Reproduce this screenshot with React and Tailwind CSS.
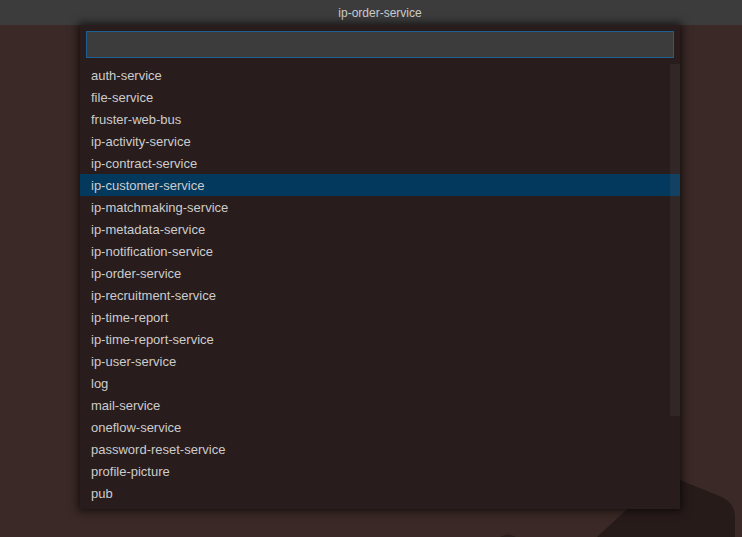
const items = [
  'auth-service',
  'file-service',
  'fruster-web-bus',
  'ip-activity-service',
  'ip-contract-service',
  'ip-customer-service',
  'ip-matchmaking-service',
  'ip-metadata-service',
  'ip-notification-service',
  'ip-order-service',
  'ip-recruitment-service',
  'ip-time-report',
  'ip-time-report-service',
  'ip-user-service',
  'log',
  'mail-service',
  'oneflow-service',
  'password-reset-service',
  'profile-picture',
  'pub',
];

export default function App() {
  const selected = 'ip-customer-service';

  return (
    <div className="relative w-[742px] h-[537px] overflow-hidden bg-[#3a2926] font-['Liberation_Sans',sans-serif]">
      {/* background decoration */}
      <svg className="absolute inset-0" width="742" height="537" viewBox="0 0 742 537">
        <path d="M597 537 L665 474 L722 497 Q735 504 735 517 L735 537 Z" fill="#271b1a" />
        <path d="M500 537 Q508 532 516 537 Z" fill="#2c1f1d" />
      </svg>

      {/* title bar */}
      <div className="relative h-[25px] bg-[#3c3c3c] flex items-center justify-center pl-[18px]">
        <span className="text-[12px] text-[#cccccc]">ip-order-service</span>
      </div>

      {/* quick pick */}
      <div className="relative ml-[80px] w-[600px] bg-[#281c1c] shadow-[0_0_8px_2px_rgba(0,0,0,0.65)] pt-[6px] pb-[5px]">
        <div className="px-[6px]">
          <div className="h-[27px] bg-[#3c3c3c] border border-[#1b5f93]" />
        </div>
        <div className="relative mt-[6px]">
          {items.map((name) => (
            <div
              key={name}
              className={
                name === selected
                  ? 'h-[22px] leading-[22px] pt-[1px] pl-[11px] text-[13px] text-[#cccccc] bg-[#04395e]'
                  : 'h-[22px] leading-[22px] pt-[1px] pl-[11px] text-[13px] text-[#cccccc]'
              }
            >
              {name}
            </div>
          ))}
          <div className="absolute right-0 top-0 w-[10px] h-[352px] bg-[rgba(121,121,121,0.12)]" />
        </div>
      </div>
    </div>
  );
}
